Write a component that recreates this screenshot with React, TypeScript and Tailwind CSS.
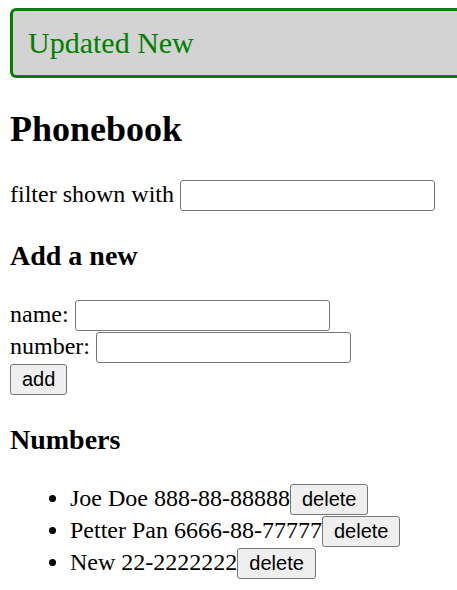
const persons = [
  { id: 1, name: 'Joe Doe', number: '888-88-88888' },
  { id: 2, name: 'Petter Pan', number: '6666-88-77777' },
  { id: 3, name: 'New', number: '22-2222222' },
]

const inputClass =
  "inline-block w-[255px] h-[31px] align-baseline bg-white border border-solid border-[#767676] rounded-[3px] px-[3px] font-['Liberation_Sans',Arial,sans-serif] text-[20px] leading-[normal] text-black"

const buttonClass =
  "inline-block h-[31px] align-baseline bg-[#efefef] border border-solid border-[#767676] rounded-[3px] px-[11px] font-['Liberation_Sans',Arial,sans-serif] text-[20px] leading-[normal] text-black"

function Notification({ message }: { message: string }) {
  return (
    <div className="mr-[-40px] mb-[15px] border-[3px] border-solid border-[#008000] rounded-[6px] bg-[#d3d3d3] px-[15px] py-[15px] text-[30px] leading-[normal] text-[#008000]">
      {message}
    </div>
  )
}

export default function App() {
  return (
    <div className="min-h-[590px] overflow-hidden bg-white pt-[8px] pl-[10px] font-['Liberation_Serif','Times_New_Roman',serif] text-[24px] leading-[normal] text-black">
      <Notification message="Updated New" />

      <h2 className="my-[30px] text-[36px] font-bold leading-[normal]">Phonebook</h2>

      <div className="h-[32px]">
        filter shown with <input className={inputClass} />
      </div>

      <h3 className="my-[28px] text-[28px] font-bold leading-[normal]">Add a new</h3>

      <form>
        <div className="h-[32px]">
          name: <input className={inputClass} />
        </div>
        <div className="h-[32px]">
          number: <input className={inputClass} />
        </div>
        <div className="h-[32px]">
          <button type="submit" className={buttonClass}>
            add
          </button>
        </div>
      </form>

      <h3 className="my-[28px] text-[28px] font-bold leading-[normal]">Numbers</h3>

      <ul className="my-[24px] list-disc pl-[60px]">
        {persons.map((p) => (
          <li key={p.id} className="h-[32px]">
            {p.name} {p.number}
            <button className={buttonClass}>delete</button>
          </li>
        ))}
      </ul>
    </div>
  )
}
